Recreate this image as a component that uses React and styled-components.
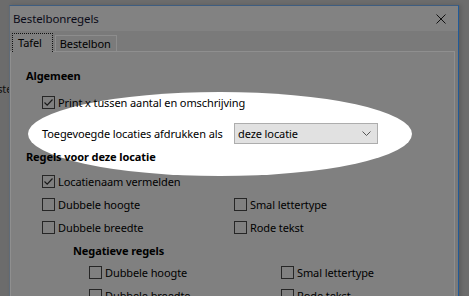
import React from "react";
import styled, { createGlobalStyle } from "styled-components";

const GlobalStyle = createGlobalStyle`
*{
  margin: 0;
  padding: 0;
  box-sizing: border-box;
}
body{
  background-color: #6c6c6c;
  font-family: "Noto Sans", "Open Sans", sans-serif;
  font-size: 11px;
  letter-spacing: -0.1px;
  color: #000;
  overflow: hidden;
}
`;

const Desktop = styled.div`
  position: relative;
  width: 469px;
  height: 296px;
  overflow: hidden;
`;

const BackText = styled.div`
  padding: 81px 0 0 0;
  margin-left: -16px;
  color: #111;
`;

const Dialog = styled.div`
  position: absolute;
  left: 9px;
  top: 5px;
  width: 450px;
  height: 320px;
  background: #7a7a7a;
  border: 1px solid #5f6b78;
  border-right-color: #1f5a99;
  border-top-color: #3e5d80;
  box-shadow: 2px 0 4px rgba(0, 0, 0, 0.15);
`;

const TitleBar = styled.div`
  height: 25px;
  display: flex;
  align-items: center;
  justify-content: space-between;
  padding: 0 12px 0 3px;
  background: #828282;
  color: #0b0b18;
  font-size: 11.5px;
`;

const Close = styled.span`
  display: flex;
  width: 10px;
  height: 10px;
`;

const TabStrip = styled.div`
  display: flex;
  align-items: flex-end;
  height: 20px;
  padding-left: 2px;
`;

const Tab = styled.div`
  display: flex;
  align-items: center;
  height: ${(p) => (p.$active ? "19px" : "16px")};
  padding: ${(p) => (p.$active ? "0 10px 2px 5px" : "0 5px 0 4px")};
  background: ${(p) => (p.$active ? "#808080" : "#7b7b7b")};
  border: ${(p) => (p.$active ? "1px dotted #111" : "1px solid #8d8d8d")};
  border-bottom: none;
  margin-right: 2px;
  margin-bottom: ${(p) => (p.$active ? "-1px" : "0")};
  position: relative;
  z-index: 2;
`;

const Panel = styled.div`
  position: relative;
  margin: 0 3px 0 0;
  height: 260px;
  background: #808080;
  border: 1px solid #8f8f8f;
  padding-top: 12px;
`;

const Spot = styled.div`
  position: absolute;
  left: 17px;
  top: 40px;
  width: 384px;
  height: 84px;
  border-radius: 50%;
  background: #fff;
  z-index: 0;
`;

const Row = styled.div`
  position: relative;
  z-index: 1;
  display: grid;
  grid-template-columns: 192px 192px;
  align-items: center;
  height: ${(p) => p.$h || 23}px;
  margin-top: ${(p) => p.$mt || 0}px;
  padding-left: ${(p) => p.$indent || 31}px;
`;

const Heading = styled.div`
  position: relative;
  z-index: 1;
  display: flex;
  align-items: center;
  height: ${(p) => p.$h || 23}px;
  margin-top: ${(p) => p.$mt || 0}px;
  padding-left: ${(p) => p.$indent || 15}px;
  font-weight: bold;
`;

const Check = styled.label`
  display: flex;
  align-items: center;
  gap: 3px;
  white-space: nowrap;
`;

const Box = styled.span`
  display: flex;
  align-items: center;
  justify-content: center;
  width: 13px;
  height: 13px;
  border: 1px solid #262626;
  background: #808080;
  flex-shrink: 0;
`;

const Label = styled.span`
  white-space: nowrap;
`;

const Select = styled.div`
  display: flex;
  align-items: center;
  justify-content: space-between;
  width: 144px;
  height: 21px;
  padding: 0 6px 0 3px;
  background: #e1e1e1;
  border: 1px solid #adadad;
`;

const Tick = () => (
  <svg width="11" height="11" viewBox="0 0 11 11">
    <path d="M1.5 5.5 L4.2 8.2 L9.5 2.5" fill="none" stroke="#1a1a1a" strokeWidth="1.2" />
  </svg>
);

const CheckItem = ({ checked, children }) => (
  <Check>
    <Box>{checked && <Tick />}</Box>
    <Label>{children}</Label>
  </Check>
);

export default function App() {
  return (
    <Desktop>
      <GlobalStyle />
      <BackText>Beste</BackText>
      <Dialog>
        <TitleBar>
          <span>Bestelbonregels</span>
          <Close>
            <svg width="10" height="10" viewBox="0 0 10 10">
              <path d="M0.5 0.5 L9.5 9.5 M9.5 0.5 L0.5 9.5" stroke="#111" strokeWidth="1" />
            </svg>
          </Close>
        </TitleBar>
        <TabStrip>
          <Tab $active>Tafel</Tab>
          <Tab>Bestelbon</Tab>
        </TabStrip>
        <Panel>
          <Spot />
          <Heading>Algemeen</Heading>
          <Row $mt={4}>
            <CheckItem checked>Print x tussen aantal en omschrijving</CheckItem>
          </Row>
          <Row $mt={8}>
            <Label>Toegevoegde locaties afdrukken als</Label>
            <Select>
              <span>deze locatie</span>
              <svg width="9" height="6" viewBox="0 0 9 6">
                <path d="M0.5 0.5 L4.5 4.5 L8.5 0.5" fill="none" stroke="#555" strokeWidth="1" />
              </svg>
            </Select>
          </Row>
          <Heading>Regels voor deze locatie</Heading>
          <Row $mt={2}>
            <CheckItem checked>Locatienaam vermelden</CheckItem>
          </Row>
          <Row>
            <CheckItem>Dubbele hoogte</CheckItem>
            <CheckItem>Smal lettertype</CheckItem>
          </Row>
          <Row>
            <CheckItem>Dubbele breedte</CheckItem>
            <CheckItem>Rode tekst</CheckItem>
          </Row>
          <Heading $h={22} $indent={62}>Negatieve regels</Heading>
          <Row $indent={78}>
            <CheckItem>Dubbele hoogte</CheckItem>
            <CheckItem>Smal lettertype</CheckItem>
          </Row>
          <Row $indent={78}>
            <CheckItem>Dubbele breedte</CheckItem>
            <CheckItem>Rode tekst</CheckItem>
          </Row>
        </Panel>
      </Dialog>
    </Desktop>
  );
}
